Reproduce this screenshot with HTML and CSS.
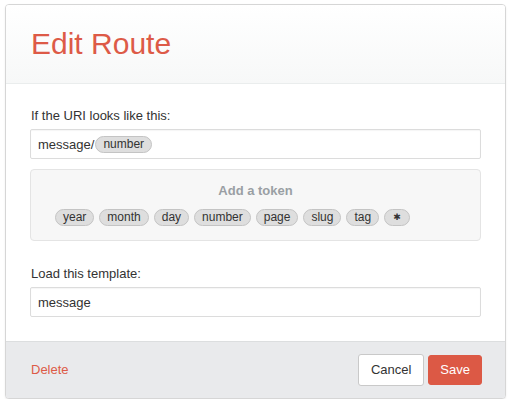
FILE: index.html
```html
<!DOCTYPE html>
<html>
<head>
<meta charset="utf-8">
<link rel="stylesheet" href="styles.css">
</head>
<body>
<div class="modal">
  <div class="modal-header">
    <h1 class="title">Edit Route</h1>
  </div>
  <div class="modal-body">
    <label class="label">If the URI looks like this:</label>
    <div class="input">message/<span class="token">number</span></div>
    <div class="token-box">
      <div class="token-title">Add a token</div>
      <div class="token-list">
        <span class="token">year</span>
        <span class="token">month</span>
        <span class="token">day</span>
        <span class="token">number</span>
        <span class="token">page</span>
        <span class="token">slug</span>
        <span class="token">tag</span>
        <span class="token token-star">✱</span>
      </div>
    </div>
    <label class="label label-2">Load this template:</label>
    <div class="input">message</div>
  </div>
  <div class="modal-footer">
    <a class="delete">Delete</a>
    <div class="actions">
      <button class="btn btn-default">Cancel</button>
      <button class="btn btn-primary">Save</button>
    </div>
  </div>
</div>
</body>
</html>
```
FILE: styles.css
```css
* { box-sizing: border-box; }
html, body { margin: 0; padding: 0; background: #fff; }
body {
  font-family: "Liberation Sans", Arial, sans-serif;
  font-size: 13px;
  color: #333;
  padding: 4px 5px 0 5px;
}
.modal {
  width: 501px;
  height: 395px;
  border: 1px solid #d6d6d6;
  border-radius: 4px;
  box-shadow: 0 1px 2px rgba(0,0,0,0.08);
  overflow: hidden;
  display: flex;
  flex-direction: column;
  background: #fff;
}
.modal-header {
  height: 79px;
  background: linear-gradient(#ffffff, #f7f8f8);
  border-bottom: 1px solid #eaeded;
  display: flex;
  align-items: center;
  padding: 0 25px;
}
.title {
  margin: 0;
  font-weight: normal;
  font-size: 30px;
  color: #dd5a47;
  line-height: 34px;
}
.modal-body {
  padding: 23px 24px 24px 24px;
  display: flex;
  flex-direction: column;
}
.label {
  display: block;
  line-height: 18px;
  height: 18px;
  margin-bottom: 4px;
  margin-left: 1px;
  color: #333;
}
.label-2 { margin-top: 24px; }
.input {
  height: 30px;
  border: 1px solid #dcdcdc;
  border-radius: 2px;
  box-shadow: inset 0 1px 1px rgba(0,0,0,0.04);
  padding: 0 7px;
  display: flex;
  align-items: center;
  font-size: 13px;
  color: #333;
}
.token {
  display: inline-flex;
  align-items: center;
  height: 17px;
  padding: 0 7px;
  border: 1px solid #c4c4c4;
  border-radius: 9px;
  background: #dedede;
  font-size: 12px;
  color: #333;
  line-height: 15px;
}
.input .token { margin-left: 1px; }
.token-box {
  margin-top: 10px;
  height: 72px;
  border: 1px solid #e4e4e4;
  border-radius: 4px;
  background: #f7f7f7;
  padding: 12px 24px 0 24px;
}
.token-title {
  text-align: center;
  font-weight: bold;
  color: #9a9fa4;
  line-height: 18px;
  margin-bottom: 9px;
}
.token-list {
  display: flex;
  gap: 5px;
}
.token-star {
  font-family: "DejaVu Sans", sans-serif;
  font-size: 9px;
  padding: 0 8px;
  color: #333;
}
.modal-footer {
  flex: 1;
  background: #e9eaec;
  border-top: 1px solid #dcdedf;
  display: flex;
  align-items: center;
  justify-content: space-between;
  padding: 0 23px 1px 25px;
}
.delete {
  color: #dd5a47;
  font-size: 13px;
}
.actions {
  display: flex;
  align-items: center;
  gap: 4px;
}
.btn {
  font-family: "Liberation Sans", Arial, sans-serif;
  font-size: 13px;
  border-radius: 3px;
  cursor: pointer;
}
.btn-default {
  height: 32px;
  background: #fff;
  border: 1px solid #c9c9c9;
  color: #333;
  padding: 0 12px;
}
.btn-primary {
  height: 30px;
  background: #dc5945;
  border: 1px solid #dc5945;
  color: #fff;
  padding: 0 11px;
}
```
